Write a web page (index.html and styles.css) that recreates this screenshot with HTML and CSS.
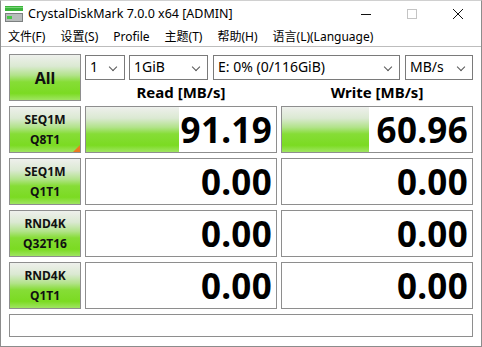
FILE: index.html
```html
<!DOCTYPE html>
<html lang="zh-CN">
<head>
    <meta charset="UTF-8">
    <title>CrystalDiskMark 7.0.0 x64 [ADMIN]</title>
    <link rel="stylesheet" href="styles.css">
</head>
<body>
<div class="window">
    <div class="titlebar">
        <svg class="appicon" width="18" height="16" viewBox="0 0 18 16">
            <rect x="0" y="0" width="18" height="5" fill="#3cb43c"/>
            <rect x="0" y="1" width="18" height="1" fill="#7ad67a"/>
            <rect x="0.5" y="7.5" width="17" height="8" fill="#b8bcbc" stroke="#7c8080"/>
            <rect x="2" y="10" width="5" height="3" fill="#46c846"/>
        </svg>
        <span class="title">CrystalDiskMark 7.0.0 x64 [ADMIN]</span>
        <div class="controls">
            <div class="ctl"><svg width="12" height="12" viewBox="0 0 12 12"><path d="M1 6.5h10" stroke="#111" stroke-width="1"/></svg></div>
            <div class="ctl"><svg width="12" height="12" viewBox="0 0 12 12"><rect x="1.5" y="1.5" width="9" height="9" fill="none" stroke="#c4c4c4"/></svg></div>
            <div class="ctl"><svg width="12" height="12" viewBox="0 0 12 12"><path d="M1 1l10 10M11 1L1 11" stroke="#111" stroke-width="1"/></svg></div>
        </div>
    </div>
    <div class="menubar">
        <span>文件(F)</span>
        <span>设置(S)</span>
        <span>Profile</span>
        <span>主题(T)</span>
        <span>帮助(H)</span>
        <span>语言(L)(Language)</span>
    </div>

    <div class="main">
        <div class="btn all">All</div>
        <div class="top">
            <div class="selects">
                <div class="select s-count">1</div>
                <div class="select s-size">1GiB</div>
                <div class="select s-drive">E: 0% (0/116GiB)</div>
                <div class="select s-unit">MB/s</div>
            </div>
            <div class="heads">
                <div>Read [MB/s]</div>
                <div>Write [MB/s]</div>
            </div>
        </div>

        <div class="btn test marked">SEQ1M<br>Q8T1</div>
        <div class="cell" style="--bar: 49%">91.19</div>
        <div class="cell" style="--bar: 46%">60.96</div>

        <div class="btn test">SEQ1M<br>Q1T1</div>
        <div class="cell">0.00</div>
        <div class="cell">0.00</div>

        <div class="btn test">RND4K<br>Q32T16</div>
        <div class="cell">0.00</div>
        <div class="cell">0.00</div>

        <div class="btn test">RND4K<br>Q1T1</div>
        <div class="cell">0.00</div>
        <div class="cell">0.00</div>

        <div class="status"></div>
    </div>
</div>
</body>
</html>
```

FILE: styles.css
```css
body {
    margin: 0;
    background: #fff;
    font-family: "Noto Sans", "Noto Sans CJK SC", sans-serif;
    color: #000;
}

.window {
    width: 482px;
    height: 347px;
    box-sizing: border-box;
    border: 1px solid #8c8c8c;
    border-top-color: #d0d0d0;
    background: #fff;
    overflow: hidden;
}

.titlebar {
    height: 25px;
    display: flex;
    align-items: center;
}

.appicon {
    margin-left: 4px;
    margin-top: 1px;
}

.title {
    margin-left: 5px;
    font-size: 12.5px;
    color: #000;
}

.controls {
    margin-left: auto;
    display: flex;
    height: 25px;
}

.ctl {
    width: 46px;
    display: flex;
    align-items: center;
    justify-content: center;
}

.menubar {
    height: 20px;
    display: flex;
    align-items: center;
    padding-left: 1px;
    font-size: 12px;
    border-bottom: 1px solid #bdbdbd;
}

.menubar span {
    padding: 0 7px 0 6px;
    margin-right: 2px;
}

.main {
    display: grid;
    grid-template-columns: 72px 192px 192px;
    grid-template-rows: 47px 47px 47px 47px 47px 23px;
    column-gap: 4px;
    row-gap: 5px;
    padding: 7px 0 0 8px;
}

.btn {
    box-sizing: border-box;
    border: 1px solid #8e8e8e;
    background: linear-gradient(to bottom, #eef0ec 0%, #dbe9d2 25%, #b2e38a 45%, #86dd36 60%, #7bdb22 85%, #9fe562 100%);
    display: flex;
    align-items: center;
    justify-content: center;
    text-align: center;
    font-weight: bold;
    color: #111;
}

.all {
    font-size: 16px;
}

.test {
    font-size: 12px;
    line-height: 20px;
    position: relative;
}

.marked::after {
    content: "";
    position: absolute;
    right: 0;
    bottom: 0;
    border-style: solid;
    border-width: 0 0 7px 7px;
    border-color: transparent transparent #ec7a22 transparent;
}

.top {
    grid-column: 2 / 4;
    display: flex;
    flex-direction: column;
}

.selects {
    display: flex;
    margin-top: 1px;
    height: 25px;
}

.select {
    box-sizing: border-box;
    height: 25px;
    border: 1px solid #7a7a7a;
    background: #fff;
    font-size: 14px;
    line-height: 22px;
    padding-left: 4px;
    position: relative;
}

.select::after {
    content: "";
    position: absolute;
    right: 8px;
    top: 8px;
    width: 5px;
    height: 5px;
    border-right: 1px solid #555;
    border-bottom: 1px solid #555;
    transform: rotate(45deg);
}

.s-count { width: 40px; margin-right: 4px; }
.s-size { width: 79px; margin-right: 5px; }
.s-drive { width: 187px; margin-right: 5px; }
.s-unit { width: 68px; }

.heads {
    display: grid;
    grid-template-columns: 192px 192px;
    column-gap: 4px;
    flex: 1;
    align-items: center;
    font-size: 15px;
    font-weight: bold;
    text-align: center;
    padding-top: 2px;
}

.cell {
    --bar: 0%;
    box-sizing: border-box;
    border: 1px solid #8e8e8e;
    background-color: #fff;
    background-image: linear-gradient(to bottom, #eef0ec 0%, #dbe9d2 25%, #b2e38a 45%, #86dd36 60%, #7bdb22 85%, #9fe562 100%);
    background-repeat: no-repeat;
    background-size: var(--bar) 100%;
    display: flex;
    align-items: center;
    justify-content: flex-end;
    padding-right: 4px;
    font-size: 35px;
    font-weight: bold;
    letter-spacing: 0.3px;
    color: #000;
}

.status {
    grid-column: 1 / 4;
    box-sizing: border-box;
    border: 1px solid #8e8e8e;
    background: #fff;
}
```
